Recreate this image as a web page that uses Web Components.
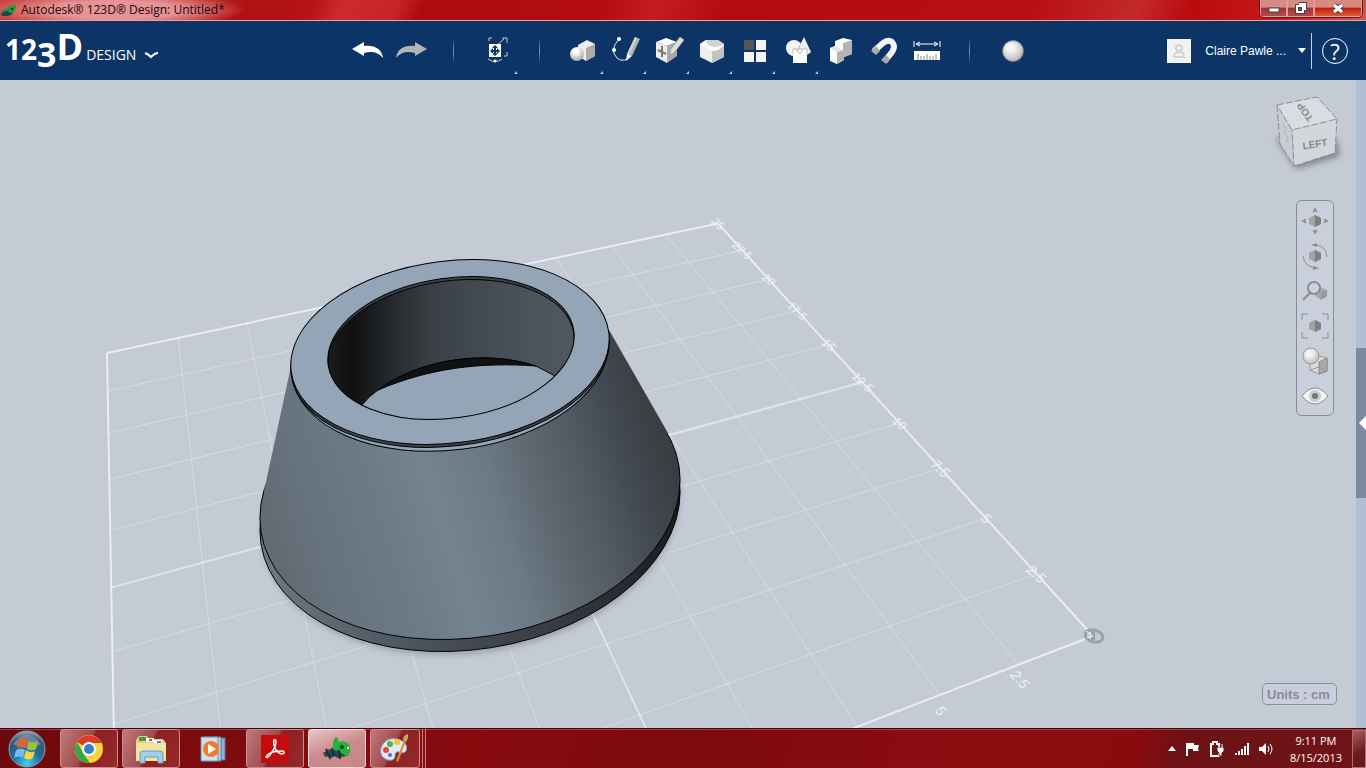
<!DOCTYPE html>
<html lang="en">
<head>
<meta charset="utf-8">
<title>Autodesk 123D Design</title>
<style>
  body {
    margin: 0;
    font-family: "Open Sans", "Noto Sans", sans-serif;
    font-size: 12px;
  }
</style>
</head>
<body>
<app-window></app-window>

<template id="title-bar">
  <style>
    :host {
      display: flex;
      align-items: center;
      height: 20px;
      border-bottom: 1px solid #f0a09c;
      color: #1c0808;
      background:
        radial-gradient(ellipse 130px 18px at 115px 10px, rgba(240, 175, 178, .75) 50%, transparent 100%),
        linear-gradient(115deg, #c8403e 0, #c8403e 12%, #b01014 18%, #b51316 23%, #cc2a2c 25%, #c82427 29%, #ad0b0e 31%, #b40d10 44%, #c41c1f 48%, #b30c0f 53%, #b70e11 75%, #c3292b 83%, #b80b0e 87%, #c4181b 93%, #cf5656 100%);
    }
    svg { margin: 0 4px 0 1px; }
    .title { flex: 1; line-height: 20px; }
    .controls {
      display: flex;
      align-self: flex-start;
      margin-right: 3px;
      border: 1px solid #5c1a1c;
      border-top: 0;
      border-radius: 0 0 5px 5px;
      overflow: hidden;
    }
    button {
      width: 27px;
      height: 17px;
      padding: 0;
      border: 1px solid #e39a98;
      border-top: 0;
      background: linear-gradient(#d78a88 45%, #9f3436 50%, #b54a4a);
    }
    button svg { display: block; margin: 0 auto; }
    button.close {
      width: 48px;
      background: linear-gradient(#d98a80 45%, #b8200c 50%, #de5a38);
    }
  </style>
  <svg width="16" height="16" viewBox="0 0 16 16"><path d="M1 8l5-1 3-4 3 1 3-2-1 7-3 3H5l-3 1z" fill="#1f9a38"/><path d="M0 11l6-2 6 3-5 2-6 0z" fill="#20484a"/><circle cx="11" cy="7" r="1" fill="#0a2a10"/></svg>
  <span class="title">Autodesk® 123D® Design: Untitled*</span>
  <div class="controls">
    <button aria-label="Minimize"><svg width="14" height="14"><rect x="2" y="7" width="10" height="4" fill="#fff" stroke="#444"/></svg></button>
    <button aria-label="Restore"><svg width="14" height="14"><g fill="none" stroke="#444" stroke-width="4"><path d="M5 3h6v6"/><rect x="3" y="5" width="6" height="6"/></g><g fill="none" stroke="#fff" stroke-width="2"><path d="M5 3h6v6"/><rect x="3" y="5" width="6" height="6"/></g></svg></button>
    <button class="close" aria-label="Close"><svg width="14" height="14"><path d="M3 4l8 7M11 4l-8 7" stroke="#444" stroke-width="5"/><path d="M3 4l8 7M11 4l-8 7" stroke="#fff" stroke-width="3"/></svg></button>
  </div>
</template>

<template id="tool-button">
  <style>
    :host { display: block; }
    button {
      position: relative;
      display: grid;
      place-items: center;
      width: 43px;
      height: 59px;
      padding: 0;
      border: 0;
      background: none;
    }
    ::slotted(svg) { display: block; }
    .corner { display: none; }
    :host([menu]) .corner {
      display: block;
      position: absolute;
      right: 1px;
      bottom: 6px;
      border-left: 3px solid transparent;
      border-bottom: 3px solid #c4ccd8;
    }
  </style>
  <button><slot></slot><span class="corner"></span></button>
</template>

<template id="tool-bar">
  <style>
    :host {
      display: flex;
      align-items: center;
      height: 59px;
      background: #0c3467;
      color: #fff;
    }
    .brand {
      display: flex;
      align-items: baseline;
      width: 341px;
      padding-left: 5px;
      font-weight: 700;
      font-size: 28px;
      line-height: 40px;
    }
    .brand .three { font-size: 34px; vertical-align: -7px; }
    .brand .dee { font-size: 36px; margin-right: 3px; }
    .brand .name { font-size: 14px; font-weight: 400; margin-right: 8px; }
    .brand button { padding: 0; border: 0; background: none; }
    .tools { display: flex; flex: 1; }
    .split {
      width: 1px;
      height: 26px;
      margin: auto 21px;
      background: linear-gradient(transparent, #8a97a8, transparent);
    }
    .account {
      display: flex;
      align-items: center;
      gap: 14px;
      padding: 0;
      border: 0;
      background: none;
      color: #fff;
      font: 12px "Liberation Sans", Arial, sans-serif;
    }
    .account svg:last-child { margin-left: -2px; }
    .line { width: 1px; height: 36px; margin: 0 10px 0 5px; background: #c9d3e2; }
    .help {
      width: 26px;
      height: 26px;
      margin-right: 18px;
      padding: 0;
      border: 1px solid #fff;
      border-radius: 50%;
      background: none;
      color: #fff;
      font: 22px/24px "Open Sans", sans-serif;
    }
  </style>
  <div class="brand">
    <span>12<span class="three">3</span></span><span class="dee">D</span><span class="name">DESIGN</span>
    <button aria-label="Application menu"><svg width="15" height="9" viewBox="0 0 15 9"><path d="M1 2q3 1 6 4 4-4 7-4" fill="none" stroke="#fff" stroke-width="2"/></svg></button>
  </div>
  <div class="tools">
    <tool-button><svg width="34" height="24" viewBox="0 0 34 24"><path d="M1 10L13 3v4c12-1 18 4 19 12-5-6-11-7-19-5v3z" fill="#fff"/></svg></tool-button>
    <tool-button><svg width="34" height="24" viewBox="0 0 34 24"><path d="M33 10L21 3v4C9 6 3 11 2 19c5-6 11-7 19-5v3z" fill="#b2b4b6"/></svg></tool-button>
    <span class="split"></span>
    <tool-button menu><svg width="28" height="30" viewBox="0 0 28 30"><path d="M6 5V2h3M19 2h5v5M24 16v4h-3M13 10l8-7" fill="none" stroke="#c6d0df"/><rect x="6" y="8" width="12" height="13" fill="#fff"/><path d="M12 10v9M8 15h8" stroke="#0c3467" stroke-width="2"/><path d="M12 9l3 3H9zM12 20l3-3H9zM7 15l3-3v6zM17 15l-3-3v6z" fill="#0c3467"/><path d="M5 23q7 5 14 0" fill="none" stroke="#c6d0df"/><circle cx="12" cy="25" r="1.500" fill="#fff"/></svg></tool-button>
    <span class="split"></span>
    <tool-button menu><svg width="30" height="30" viewBox="0 0 30 30"><path d="M10 9l9-5 8 4v12l-9 5-8-5z" fill="#eee"/><path d="M18 12l9-4v12l-9 5z" fill="#aaa"/><circle cx="9" cy="18" r="7" fill="url(#ball)"/><defs><radialGradient id="ball" cx=".4" cy=".3" r=".8"><stop offset=".2" stop-color="#fff"/><stop offset="1" stop-color="#9a9a9a"/></radialGradient></defs></svg></tool-button>
    <tool-button menu><svg width="30" height="30" viewBox="0 0 30 30"><path d="M8 3Q-2 14 6 22q5 4 10 1" fill="none" stroke="#e4eaf2"/><circle cx="8" cy="3" r="2" fill="#fff"/><circle cx="3" cy="14" r="2" fill="#fff"/><path d="M16 18L24 1l5 2-8 17z" fill="#b2b2b2"/><path d="M24 1l2 1-8 17-2-1z" fill="#d4d4d4"/><path d="M16 18l5 2-6 5z" fill="#fff"/></svg></tool-button>
    <tool-button menu><svg width="30" height="30" viewBox="0 0 30 30"><path d="M2 6l10-4 11 4-10 4z" fill="#fff"/><path d="M2 6l11 4v17L2 21z" fill="#eee"/><path d="M13 10l10-4v14l-10 7z" fill="#aaa"/><path d="M8 10v11M4 14l8 4" stroke="#777" stroke-width="2"/><path d="M16 14L26 1l4 3-10 13-4 2z" fill="#ddd" stroke="#999"/></svg></tool-button>
    <tool-button menu><svg width="30" height="30" viewBox="0 0 30 30"><path d="M3 8l6-4h12l6 4v13l-12 6-12-6z" fill="#eee"/><path d="M15 15q9 0 12-7v13l-12 6z" fill="#c2c2c2"/><path d="M3 8l6-4q1 7 9 7 4 0 9-3-3 7-12 7z" fill="#fff"/><path d="M9 4h12l6 4q-5 3-9 3-8 0-9-7z" fill="#d2d2d2"/></svg></tool-button>
    <tool-button menu><svg width="24" height="24" viewBox="0 0 24 24"><g fill="#f4f4f4"><rect x="13" y="1" width="10" height="10"/><rect x="1" y="13" width="10" height="10"/><rect x="13" y="13" width="10" height="10"/></g><rect x="1" y="1" width="10" height="10" fill="#555"/></svg></tool-button>
    <tool-button menu><svg width="30" height="30" viewBox="0 0 30 30"><circle cx="11" cy="12" r="8" fill="#f6f6f6"/><path d="M21 1l7 15-4 3h-7l-3-4z" fill="#eee"/><rect x="10" y="13" width="14" height="14" fill="#fff"/><path d="M14 16l3-7M10 18v-5h14v6M13 13l4 5 3-5" fill="none" stroke="#bbb"/></svg></tool-button>
    <tool-button><svg width="30" height="30" viewBox="0 0 30 30"><path d="M4 12l5-2V5l8-3 9 2v14l-8 3v3l-7 4-7-3z" fill="#fff"/><path d="M17 7l9-3v14l-8 3v3l-7 4V16l6-2z" fill="#b4b4b4"/><path d="M4 12l5-2 8 4-6 2z" fill="#e4e4e4"/></svg></tool-button>
    <tool-button><svg width="30" height="30" viewBox="0 0 30 30"><path d="M5 15l9-8q5-4 9-1 4 4 0 10l-7 9" fill="none" stroke="#f4f4f4" stroke-width="6"/><path d="M7 10l4 5-4 4-5-4zM17 19l4 4-4 5-5-4z" fill="#aaa"/></svg></tool-button>
    <tool-button><svg width="28" height="26" viewBox="0 0 28 26"><path d="M1 3v6M27 3v6M4 6h20M7 4L3 6l4 2M21 4l4 2-4 2" fill="none" stroke="#fff"/><rect x="1" y="13" width="26" height="9" fill="#fff"/><path d="M5 22v-6M8 22v-4M11 22v-4M14 22v-6M17 22v-4M20 22v-4M23 22v-6" stroke="#889"/></svg></tool-button>
    <span class="split"></span>
    <tool-button><svg width="24" height="24" viewBox="0 0 24 24"><defs><radialGradient id="ball2" cx=".4" cy=".35" r=".7"><stop offset=".2" stop-color="#f6f6f6"/><stop offset="1" stop-color="#b2b2b2"/></radialGradient></defs><circle cx="12" cy="12" r="10.500" fill="url(#ball2)" stroke="#777"/></svg></tool-button>
  </div>
  <button class="account">
    <svg width="24" height="24" viewBox="0 0 24 24"><rect width="24" height="24" fill="#f2f2f2"/><circle cx="12" cy="9" r="3" fill="none" stroke="#d4d4d4" stroke-width="2"/><path d="M7 18q0-5 5-5t5 5z" fill="none" stroke="#d4d4d4" stroke-width="2"/></svg>
    <span>Claire Pawle ...</span>
    <svg width="8" height="5"><path d="M0 0h8L4 5z" fill="#fff"/></svg>
  </button>
  <span class="line"></span>
  <button class="help" aria-label="Help">?</button>
</template>

<template id="scene-view">
  <style>
    :host { display: block; overflow: hidden; }
    svg { display: block; width: 100%; height: 100%; }
    text {
      font-family: "Liberation Sans", Arial, sans-serif;
      font-style: italic;
      font-size: 14px;
      fill: #eef3fa;
      text-anchor: middle;
      dominant-baseline: central;
    }
  </style>
  <svg viewBox="0 80 1356 648" preserveAspectRatio="xMinYMin slice">
    <defs>
      <linearGradient id="cone" gradientUnits="userSpaceOnUse" x1="265" y1="520" x2="650" y2="400">
        <stop offset="0" stop-color="#626b73"/>
        <stop offset=".14" stop-color="#677480"/>
        <stop offset=".27" stop-color="#6c7a87"/>
        <stop offset=".42" stop-color="#748390"/>
        <stop offset=".56" stop-color="#6c7a87"/>
        <stop offset=".66" stop-color="#606a73"/>
        <stop offset=".78" stop-color="#535b65"/>
        <stop offset=".9" stop-color="#424950"/>
        <stop offset="1" stop-color="#3a3e42"/>
      </linearGradient>
      <linearGradient id="base" gradientUnits="userSpaceOnUse" x1="260" y1="0" x2="680" y2="0">
        <stop offset="0" stop-color="#707a84"/>
        <stop offset=".25" stop-color="#565f68"/>
        <stop offset=".45" stop-color="#454c54"/>
        <stop offset=".7" stop-color="#383d43"/>
        <stop offset="1" stop-color="#1a1c1e"/>
      </linearGradient>
      <linearGradient id="wall" gradientUnits="userSpaceOnUse" x1="328" y1="0" x2="574" y2="0">
        <stop offset="0" stop-color="#1b1b1b"/>
        <stop offset=".1" stop-color="#101010"/>
        <stop offset=".24" stop-color="#23272a"/>
        <stop offset=".42" stop-color="#393f45"/>
        <stop offset=".62" stop-color="#434a52"/>
        <stop offset=".85" stop-color="#4c545d"/>
        <stop offset="1" stop-color="#4f5861"/>
      </linearGradient>
      <clipPath id="hole"><ellipse rx="124" ry="70" transform="translate(451 348) rotate(-8)"/></clipPath>
      <filter id="soft"><feGaussianBlur stdDeviation="3"/></filter>
    </defs>
    <g class="grid"></g>
    <g stroke="#000">
      <ellipse rx="210" ry="138" transform="translate(471 515) rotate(-9)" fill="#707884" opacity=".5" stroke="none" filter="url(#soft)"/>
      <path d="M261 544A211 138 -9 0 1 679 478A211 138 -9 0 1 261 544z" fill="url(#base)"/>
      <path d="M261 532A211 138 -9 0 1 679 466A211 138 -9 0 1 261 532z" fill="url(#cone)"/>
      <path d="M291 366L264 491L300 520L640 460L668 433L609 330z" fill="url(#cone)" stroke="none"/>
      <ellipse rx="159" ry="93" transform="translate(450 357) rotate(-7)" fill="#93a5b7"/>
      <ellipse rx="160" ry="91" transform="translate(450 355) rotate(-7)" fill="#3b4249"/>
      <ellipse rx="160" ry="91" transform="translate(450 352) rotate(-7)" fill="#93a5b7"/>
    </g>
    <g clip-path="url(#hole)" stroke="#000">
      <rect x="320" y="270" width="260" height="160" fill="#3b4249" stroke="none"/>
      <path d="M328 368A124 70 -8 0 1 574 334A124 70 -8 0 1 328 368z" fill="url(#wall)"/>
      <path d="M362 405Q369 396 378 390C415 362 480 348 536 366L555 376L560 430H350z" fill="#93a5b7"/>
      <path d="M378 390C415 362 480 348 536 366C480 362 430 368 378 390z" fill="#101113"/>
    </g>
    <ellipse rx="124" ry="70" transform="translate(451 348) rotate(-8)" fill="none" stroke="#000"/>
    <g class="labels"></g>
    <ellipse cx="1094" cy="636" rx="9" ry="6" transform="rotate(15 1094 636)" fill="#c4cbd5" fill-opacity=".4" stroke="#9ba2aa" stroke-width="3"/>
    <path d="M1093 631v9" stroke="#9ba2aa" stroke-width="4"/>
    <path d="M1086 631l7 5-6 2" fill="none" stroke="#eef3fa" stroke-width="1"/>
  </svg>
</template>

<template id="view-cube">
  <style>
    :host { display: block; }
    svg { display: block; }
    text {
      font: 700 10px "Liberation Sans", Arial, sans-serif;
      fill: #868b92;
      text-anchor: middle;
      dominant-baseline: central;
    }
  </style>
  <svg width="76" height="86" viewBox="1270 90 76 86">
    <defs><filter id="shade"><feGaussianBlur stdDeviation="3"/></filter></defs>
    <path d="M1276 138L1296 169L1340 156L1337 140z" fill="#7c838c" filter="url(#shade)"/>
    <path d="M1277 105L1317 97L1337 119L1292 130z" fill="#d9dce1"/>
    <path d="M1277 105L1292 130L1294 166L1280 144z" fill="#c9ccd1"/>
    <path d="M1292 130L1337 119L1335 153L1294 166z" fill="#d3d6da"/>
    <path d="M1277 105L1317 97L1337 119L1292 130zM1277 105L1280 144L1294 166L1292 130M1294 166L1335 153L1337 119" fill="none" stroke="#8b9097" stroke-dasharray="7 2"/>
    <text transform="translate(1315 144) rotate(-9)">LEFT</text>
    <text transform="translate(1305 112) rotate(-125)">TOP</text>
    <path d="M1283 124l4 6M1284 131l4 7M1286 139l3 5" stroke="#9fa3a9" stroke-dasharray="2 1"/>
  </svg>
</template>

<template id="nav-palette">
  <style>
    :host {
      display: flex;
      flex-direction: column;
      box-sizing: border-box;
      width: 38px;
      padding: 2px 0;
      border: 1px solid #878d95;
      border-radius: 6px;
      background: #c9cfdb;
    }
    button {
      display: grid;
      place-items: center;
      height: 35px;
      padding: 0;
      border: 0;
      background: none;
    }
  </style>
  <button aria-label="Pan"><svg width="28" height="28" viewBox="0 0 28 28"><path d="M14 8l6 3v6l-6 3-6-3v-6z" fill="#a2a2a2"/><path d="M14 8l6 3v6l-6 3z" fill="#7e7e7e"/><path d="M12 5l2-4 2 4-2-1zM12 23l2 4 2-4-2 1zM5 12l-4 2 4 2-1-2zM23 12l4 2-4 2 1-2z" fill="#8d9298" stroke="#8d9298"/></svg></button>
  <button aria-label="Orbit"><svg width="28" height="28" viewBox="0 0 28 28"><path d="M14 8l6 3v6l-6 3-6-3v-6z" fill="#a2a2a2"/><path d="M14 8l6 3v6l-6 3z" fill="#7e7e7e"/><path d="M12 3q13-1 14 12M2 14q1 11 14 12" fill="none" stroke="#8a8f95"/><path d="M10 3l6-2v4zM18 26l-6-2v4z" fill="#8a8f95"/></svg></button>
  <button aria-label="Zoom"><svg width="28" height="28" viewBox="0 0 28 28"><path d="M19 10l7 3v6l-6 4-6-4v-5z" fill="#aaa"/><path d="M20 15l6-2v6l-6 4z" fill="#999"/><circle cx="13" cy="11" r="6" fill="#ccd2db" stroke="#888d93" stroke-width="2"/><path d="M9 16l-7 7" stroke="#888d93" stroke-width="2"/></svg></button>
  <button aria-label="Fit"><svg width="28" height="28" viewBox="0 0 28 28"><path d="M14 8l6 3v6l-6 3-6-3v-6z" fill="#a2a2a2"/><path d="M14 8l6 3v6l-6 3z" fill="#7e7e7e"/><path d="M1 8V2h6M21 2h6v6M27 20v6h-6M7 26H1v-6" fill="none" stroke="#888d93"/></svg></button>
  <button aria-label="Materials"><svg width="28" height="30" viewBox="0 0 28 30"><defs><radialGradient id="mat" cx=".4" cy=".35" r=".7"><stop offset=".2" stop-color="#f6f6f6"/><stop offset="1" stop-color="#b8b8b8"/></radialGradient></defs><path d="M9 12l9-2 8 2v13l-8 3-9-4z" fill="#ddd" stroke="#999"/><path d="M18 16l8-4v13l-8 3z" fill="#aaa" stroke="#888"/><path d="M9 24l9-3 8 4" fill="none" stroke="#999"/><circle cx="10" cy="10" r="8" fill="url(#mat)" stroke="#999"/></svg></button>
  <button aria-label="Visibility"><svg width="28" height="18" viewBox="0 0 28 18"><path d="M1 9q13-16 26 0-13 16-26 0z" fill="#f3f3f3" stroke="#8f8f8f"/><circle cx="14" cy="9" r="6" fill="#ccc"/><circle cx="14" cy="9" r="3" fill="#777"/></svg></button>
</template>

<template id="side-rail">
  <style>
    :host { display: flex; align-items: center; width: 10px; background: #b1bfd2; }
    button {
      display: flex;
      justify-content: flex-end;
      align-items: center;
      width: 10px;
      height: 150px;
      margin-top: 38px;
      padding: 0;
      border: 0;
      background: #7b8b9d;
    }
  </style>
  <button aria-label="Open panel"><svg width="8" height="14"><path d="M8 0v14L1 7z" fill="#fff"/></svg></button>
</template>

<template id="task-button">
  <style>
    :host { display: block; flex: none; width: 58px; }
    button {
      display: grid;
      place-items: center;
      box-sizing: border-box;
      width: 100%;
      height: 39px;
      padding: 0;
      border: 1px solid #d08c8e;
      border-radius: 3px;
      background: linear-gradient(115deg, #c07a7c, #a04a4c 45%, #8c2022 50%, #942a2c);
    }
    :host([active]) button { border-color: #f4dcdc; background: linear-gradient(160deg, #e6c6c6, #cb8a8b 50%, #c98687); }
    :host([plain]) button { border-color: transparent; background: none; }
  </style>
  <button><slot></slot></button>
</template>

<template id="task-bar">
  <style>
    :host {
      display: flex;
      align-items: center;
      box-sizing: border-box;
      height: 40px;
      border-top: 1px solid #3d0507;
      color: #fff;
      background:
        linear-gradient(rgba(255, 190, 190, .3) 1px, transparent 1px),
        linear-gradient(110deg, #6a0a0c 0, #7c0b0d 15%, #880b0e 35%, #7d0a0d 50%, #8c0c10 70%, #8a0b0e 83%, #6c1215 86%, #701316 100%);
    }
    .start { width: 54px; margin-right: 6px; padding: 0; border: 0; background: none; }
    .start svg { display: block; margin: auto; }
    .apps { display: flex; flex: 1; gap: 4px; }
    .stack { display: flex; }
    .stack i { width: 2px; border-right: 1px solid #c08486; }
    .stack task-button { width: 50px; }
    .tray { display: flex; align-items: center; gap: 8px; margin-right: 16px; }
    .clock { text-align: center; font-size: 11px; line-height: 17px; }
    .desktop {
      box-sizing: border-box;
      width: 14px;
      height: 38px;
      margin-left: 10px;
      padding: 0;
      border: 1px solid #b06c6e;
      background: linear-gradient(150deg, #a86062, #6a1a1c 60%);
    }
  </style>
  <button class="start" aria-label="Start">
    <svg width="38" height="38" viewBox="0 0 38 38"><defs><radialGradient id="orb" cy=".9" r=".9"><stop stop-color="#3fd0f0"/><stop offset=".45" stop-color="#1d6a9c"/><stop offset=".8" stop-color="#3a5876"/><stop offset="1" stop-color="#9ab0c2"/></radialGradient></defs><circle cx="19" cy="19" r="18" fill="url(#orb)" stroke="#8aa0b2"/><path d="M5 14Q19-4 33 14 19 22 5 14z" fill="#fff" opacity=".25"/><path d="M11 10q5-3 9 0l-2 8q-4-3-9 0z" fill="#e8602a"/><path d="M21 11q4 3 9 0l-2 8q-4 3-9 0z" fill="#9bc53c"/><path d="M8 20q5-3 9 0l-2 8q-4-3-9 0z" fill="#7ab8e8"/><path d="M18 20q5 4 9 1l-2 7q-4 3-9 0z" fill="#fcd440"/></svg>
  </button>
  <div class="apps">
    <task-button><svg width="30" height="30" viewBox="0 0 30 30"><circle cx="15" cy="15" r="14" fill="#fcd43a"/><path d="M15 15L3 8a14 14 0 0 1 24 0l1 1H15z" fill="#dc3a2c"/><path d="M3 8l8 14 5 7A14 14 0 0 1 3 8z" fill="#3aa64a"/><circle cx="15" cy="15" r="7" fill="#fff"/><circle cx="15" cy="15" r="5" fill="#3a80c8"/></svg></task-button>
    <task-button><svg width="34" height="30" viewBox="0 0 34 30"><path d="M2 6l3-4h8l2 3h14l3 4v18H2z" fill="#e9cf7d"/><path d="M5 3h7v4H5z" fill="#3c9c4c"/><path d="M12 4h8v4h-8zM20 6h8v3h-8z" fill="#fff"/><path d="M15 5h3v2h-3z" fill="#d04030"/><path d="M23 7h4v2h-4z" fill="#3a80d0"/><path d="M2 9h30v18H2z" fill="#f3e2a0"/><path d="M6 29V20q0-3 3-3h17q3 0 3 3v9h-5v-6H11v6z" fill="#9fd0ea" stroke="#5c9cc4"/></svg></task-button>
    <task-button plain><svg width="28" height="28" viewBox="0 0 28 28"><path d="M8 3h18v22H8z" fill="#8cb4d8" stroke="#567c9c"/><path d="M5 2h17v24H5z" fill="#b8d2e8" stroke="#567c9c"/><path d="M2 2h17v24H2z" fill="#cfe0ef" stroke="#6c8cac"/><circle cx="12" cy="14" r="8" fill="#ee7c28"/><path d="M9 9l8 5-8 5z" fill="#fff"/></svg></task-button>
    <task-button><svg width="28" height="28" viewBox="0 0 28 28"><rect width="28" height="28" fill="#c40c0c"/><path d="M5 22q1-3 7-5 4-1 10-1 3 2-1 3-5-1-7-6-2-5-1-8 2-1 2 2 0 4-4 10-4 7-6 5z" fill="none" stroke="#fff" stroke-width="1.500"/></svg></task-button>
    <task-button active><svg width="30" height="28" viewBox="0 0 30 28"><path d="M11 9q0-6 4-7l2 5q4-2 10 2 3 7-1 12h-8l-6-4z" fill="#28b03c"/><path d="M1 18l7-4 8 2 8 5-8 2-4-2-5 4 1-4-5 1z" fill="#24484c"/><path d="M4 14l4 9M10 13l2 8M17 15l1 9" stroke="#163034" stroke-width="2"/><circle cx="20" cy="12" r="2" fill="#0c3420"/><circle cx="26" cy="13" r="1" fill="#fff"/></svg></task-button>
    <div class="stack"><task-button><svg width="32" height="32" viewBox="0 0 32 32"><path d="M2 15Q6 4 18 6q12 3 9 12-2 3-7 1-4-1-4 4 0 5-7 4-9-3-7-12z" fill="#dfeaf4" stroke="#8caac4"/><circle cx="7" cy="17" r="3" fill="#e04838"/><circle cx="11" cy="11" r="3" fill="#58b440"/><circle cx="18" cy="9" r="3" fill="#f2c23c"/><circle cx="11" cy="22" r="2" fill="#3a78c8"/><path d="M25 7l2 1-8 21-2-1z" fill="#e08c34"/><path d="M24 7q0-5 5-6 1 4-2 8z" fill="#caa070"/></svg></task-button><i></i><i></i></div>
  </div>
  <div class="tray">
    <svg width="8" height="5"><path d="M4 0l4 5H0z" fill="#fff"/></svg>
    <svg width="18" height="16" viewBox="0 0 18 16"><path d="M3 2v13" stroke="#fff" stroke-width="2"/><path d="M4 2h6v2h5l-1 4 1 2H9V8H4z" fill="#fff"/></svg>
    <svg width="16" height="16" viewBox="0 0 16 16"><path d="M3 3V1h4v2h2v12H1V3z" fill="none" stroke="#fff" stroke-width="2"/><path d="M7 6h7v4l-2 2v3H9v-3l-2-2z" fill="#fff" stroke="#701316"/><path d="M9 6V3M12 6V3" stroke="#fff"/></svg>
    <svg width="16" height="16" viewBox="0 0 16 16"><path d="M2 12v2M5 10v4M8 8v6M11 5v9M14 2v12" stroke="#fff" stroke-width="2"/></svg>
    <svg width="16" height="16" viewBox="0 0 16 16"><path d="M1 6h3l4-4v12l-4-4H1z" fill="#fff"/><path d="M10 5q2 3 0 6M12 3q4 5 0 10" fill="none" stroke="#fff"/></svg>
  </div>
  <div class="clock">9:11 PM<br>8/15/2013</div>
  <button class="desktop" aria-label="Show desktop"></button>
</template>

<template id="app-window">
  <style>
    :host { display: flex; flex-direction: column; height: 100vh; }
    main { display: flex; flex: 1; min-height: 0; background: #c4cbd5; }
    .viewport { position: relative; flex: 1; min-width: 0; }
    scene-view { height: 100%; }
    view-cube { position: absolute; top: 10px; right: 10px; }
    nav-palette { position: absolute; top: 120px; right: 22px; }
    .units {
      position: absolute;
      right: 19px;
      bottom: 23px;
      box-sizing: border-box;
      width: 75px;
      height: 22px;
      padding: 0 4px;
      border: 1px solid #8a9097;
      border-radius: 5px;
      background: #c9cede;
      color: #898d93;
      font: 700 13px "Liberation Sans", Arial, sans-serif;
      text-align: left;
    }
  </style>
  <title-bar></title-bar>
  <tool-bar></tool-bar>
  <main>
    <div class="viewport">
      <scene-view></scene-view>
      <view-cube></view-cube>
      <nav-palette></nav-palette>
      <button class="units">Units : cm</button>
    </div>
    <side-rail></side-rail>
  </main>
  <task-bar></task-bar>
</template>

<script>
class TemplateElement extends HTMLElement {
  constructor() {
    super();
    const template = document.getElementById(this.localName);
    this.attachShadow({ mode: "open" }).append(template.content.cloneNode(true));
  }
}

class SceneView extends TemplateElement {
  connectedCallback() {
    this.renderGrid();
    this.renderLabels();
  }

  // work plane (0..1 on both axes) to screen, in perspective
  project(u, v) {
    const w = 1 - 0.2552 * u + 0.5991 * v;
    return [
      (1093 - 1004.4 * u + 55.2 * v) / w,
      (636 + 117 * u - 278.6 * v) / w,
    ];
  }

  line(from, to, width, opacity) {
    const [x1, y1] = this.project(...from);
    const [x2, y2] = this.project(...to);
    return `<line x1="${x1}" y1="${y1}" x2="${x2}" y2="${y2}" stroke="#f2f6fc" stroke-width="${width}" stroke-opacity="${opacity}"/>`;
  }

  renderGrid() {
    let lines = "";
    for (let i = 0; i <= 10; i++) {
      const t = i / 10;
      const edge = i === 0 || i === 10;
      const width = edge || i === 5 ? 2 : 1;
      const opacity = edge ? 0.8 : i === 5 ? 0.6 : 0.4;
      lines += this.line([t, 0], [t, 1], width, opacity);
      lines += this.line([0, t], [1, t], width, opacity);
    }
    this.shadowRoot.querySelector(".grid").innerHTML = lines;
  }

  renderLabels() {
    let labels = "";
    for (let i = 1; i <= 10; i++) {
      const [x, y] = this.project(0, i / 10);
      const size = i > 6 ? 11 : i > 3 ? 12 : 14;
      labels += `<text style="font-size: ${size}px" transform="translate(${x} ${y}) rotate(42)">${i * 2.5}</text>`;
    }
    for (let i = 1; i <= 2; i++) {
      const [x, y] = this.project(i / 10, -0.025);
      labels += `<text style="font-size: 14px" transform="translate(${x - 13} ${y - 3}) rotate(48)">${i * 2.5}</text>`;
    }
    this.shadowRoot.querySelector(".labels").innerHTML = labels;
  }
}

customElements.define("scene-view", SceneView);
customElements.define("title-bar", class extends TemplateElement {});
customElements.define("tool-button", class extends TemplateElement {});
customElements.define("tool-bar", class extends TemplateElement {});
customElements.define("view-cube", class extends TemplateElement {});
customElements.define("nav-palette", class extends TemplateElement {});
customElements.define("side-rail", class extends TemplateElement {});
customElements.define("task-button", class extends TemplateElement {});
customElements.define("task-bar", class extends TemplateElement {});
customElements.define("app-window", class extends TemplateElement {});
</script>
</body>
</html>
